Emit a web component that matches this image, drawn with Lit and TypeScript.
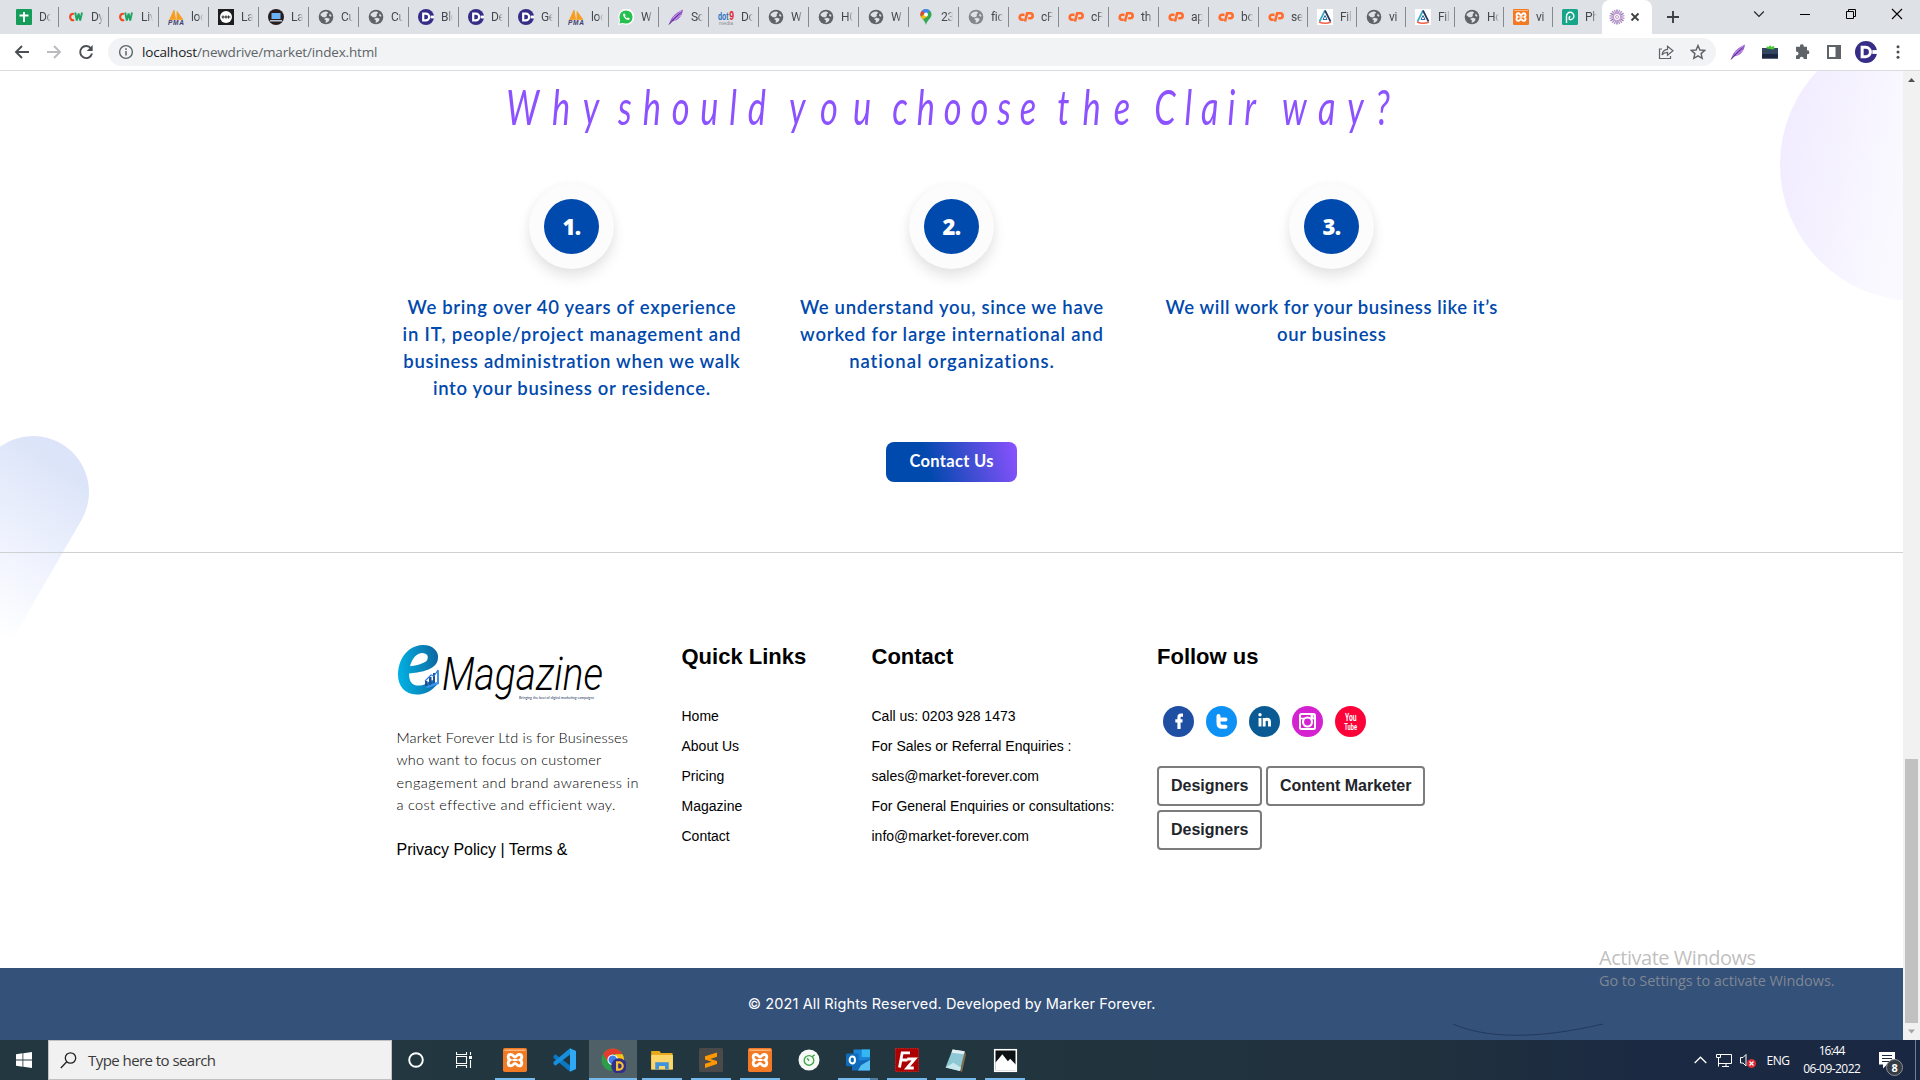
import { LitElement, html, css, svg } from "lit";
import { customElement } from "lit/decorators.js";

const fit = (text: string, w: number) => html`<span class="fit" data-w=${w}>${text}</span>`;

const TABS: [string, string][] = [
  ["sheets", "Do"], ["cw", "Dy"], ["cw", "Liv"], ["pma", "loc"], ["ink", "La"], ["laptop", "La"],
  ["globe", "Cu"], ["globe", "Cu"], ["dlogo", "Blo"], ["dlogo", "De"], ["dlogo", "Ge"], ["pma", "loc"],
  ["whatsapp", "W"], ["feather", "Sc"], ["dot9", "Do"], ["globe", "W"], ["globe", "HC"], ["globe", "W"],
  ["maps", "23"], ["globeg", "fic"], ["cp", "cP"], ["cp", "cP"], ["cp", "th"], ["cp", "ap"], ["cp", "bo"],
  ["cp", "se"], ["tri", "Fil"], ["globe", "vi"], ["tri", "Fil"], ["globe", "Ho"], ["xampp", "vi"], ["php", "Ph"],
];

const globe = (c: string) => svg`<circle cx="8" cy="8" r="7.3" fill=${c}/><path d="M2.300 6C3.500 3.700 5.800 2.400 8.600 2.600L10.200 3.600 8.600 5.600 8.900 7 7 8.400 4.500 8Z M8.500 8.800 11.500 9.600 11.200 11.800 9 13.600 7.400 13.800 8 11.500 6 10ZM11.800 4.600 13.700 7 12.400 7.800 11 6.600Z" fill="#dee1e6"/>`;
const dlogo = svg`<circle cx="8" cy="8" r="8" fill="#352d86"/><path d="M12.600 6.600H16v2.800h-3.400Z" fill="#fff"/><path d="M5.200 4.600h2.600a3.400 3.400 0 0 1 0 6.800H5.200Z" fill="none" stroke="#fff" stroke-width="2.200"/>`;
const feather = svg`<path d="M1 15.500C2 11 5 5 15 .5 14.500 7 10 12 4 12.500Z" fill="#9a5fd0"/><path d="M1 15.500 12 3.500" stroke="#542a86" stroke-width="1"/><path d="M5 9 13 2M6 11.500 13 6" stroke="#d9bcf5" stroke-width=".7"/>`;
const xampp = svg`<rect width="16" height="16" rx="1.200" fill="#f27a24"/><path d="M1 1.500h14" stroke="#fbb67c" stroke-width="1"/><path d="M5.300 4.300C3 4.300 3 7 4.600 8 3 9 3 11.900 5.300 11.900 6.800 11.900 7 10.200 8 10.200S9.200 11.900 10.700 11.900C13 11.900 13 9 11.400 8 13 7 13 4.300 10.700 4.300 9.200 4.300 9 6 8 6S6.800 4.300 5.300 4.300Z" fill="none" stroke="#fff" stroke-width="1.900"/><path d="M6.300 8h3.400" stroke="#fff" stroke-width="1.400"/>`;

const ICONS: Record<string, unknown> = {
  sheets: svg`<rect width="16" height="16" rx="1" fill="#159c58"/><path d="M8 3v10M3.500 6.500h9" stroke="#fff" stroke-width="1.900"/>`,
  cw: svg`<path d="M6 5.200A2.600 3.200 0 1 0 6 10.800" fill="none" stroke="#ee4b23" stroke-width="2.200"/><path d="M7.200 3.500l1.600 8L10.600 4.500l1.600 7L14 3.500" fill="none" stroke="#1fa463" stroke-width="1.900"/>`,
  pma: svg`<path d="M6 1 7.500 10H2ZM9 2.500 14.500 10H9ZM1 10.300h14" fill="#f89c1c" stroke="#f89c1c" stroke-width=".8"/><text x="0" y="16" font-size="6.500" font-weight="700" font-style="italic" textLength="16" fill="#3c3c6e">PMA</text>`,
  ink: svg`<rect width="16" height="16" fill="#1c1c1e"/><circle cx="8" cy="8" r="6" fill="#fff"/><path d="M3.500 8h9M5 6.500v3M8 6.500v3M10.500 6.500v3" stroke="#333" stroke-width="1.200"/>`,
  laptop: svg`<circle cx="8" cy="8" r="8" fill="#2a1c1c"/><rect x="3.500" y="4" width="9" height="6" fill="#6bb1f5"/><path d="M2 11.800h12" stroke="#c7d6e6" stroke-width="1.400"/>`,
  globe: globe("#5f6368"),
  globeg: globe("#84878a"),
  dlogo,
  whatsapp: svg`<path d="M0 16 1 11A8 8 0 1 1 5 15Z" fill="#fff"/><circle cx="8" cy="8" r="6.600" fill="#25c04d"/><path d="M1.400 14.600 2.500 10 6 13.800Z" fill="#25c04d"/><path d="M5.200 4.800C4.500 7.500 8 11.500 11 11l.8-1.700-1.800-.9-.9.8C8 8.600 7.200 7.800 6.900 7l.7-.8-.8-1.700Z" fill="#fff"/>`,
  feather,
  dot9: svg`<text x="0" y="10.500" font-size="11" font-weight="700" textLength="10.500" lengthAdjust="spacingAndGlyphs" fill="#1e6fbd">dot</text><text x="11.200" y="10.500" font-size="12" font-weight="700" textLength="4.800" lengthAdjust="spacingAndGlyphs" fill="#e22733">9</text><text x="1" y="16" font-size="5" textLength="14" fill="#8d8d8d">media</text>`,
  maps: svg`<path d="M8 0a5.600 5.600 0 0 0-5.600 5.600C2.400 9.500 7 11 8 16 9 11 13.600 9.500 13.600 5.600A5.600 5.600 0 0 0 8 0" fill="#34a853"/><path d="M8 0a5.600 5.600 0 0 0-4.300 2L8 5.600 11.800 1.500A5.600 5.600 0 0 0 8 0" fill="#4285f4"/><path d="M3.700 2a5.600 5.600 0 0 0-.8 5.800L7 3.500Z" fill="#ea4335"/><path d="M2.900 7.800 5 10.600 9.800 7 8 4Z" fill="#fbbc04"/><circle cx="8" cy="5.600" r="2" fill="#fff"/>`,
  cp: svg`<path d="M6.500 5.800H4.200a2.500 2.500 0 0 0 0 5h1.500M7 12.500 9.200 4.200h3a2.500 2.500 0 0 1 0 5h-2" fill="none" stroke="#ff6c2c" stroke-width="2.600"/>`,
  tri: svg`<rect width="16" height="16" fill="#fff"/><path d="M8 1.500 2.500 12.500" stroke="#3ca7c9" stroke-width="1.700"/><path d="M8 1.500 13.500 12.500" stroke="#27355c" stroke-width="1.700"/><path d="M2 13q6 2.500 12 0" stroke="#ef6044" stroke-width="1.700" fill="none"/><path d="M8 6.500 6 10.500h4Z" fill="none" stroke="#2a6fa8"/>`,
  xampp,
  php: svg`<rect width="16" height="16" rx="1.500" fill="#17a589"/><path d="M4.500 14V7a3.700 3.700 0 1 1 3.700 3.700C6.500 10.500 6.800 7.500 8.400 7.500" fill="none" stroke="#fff" stroke-width="1.400"/>`,
  swirl: svg`<g stroke-width="1.300">${Array.from({ length: 18 }, (_, i) => svg`<path d="M8 3.800V.4" stroke=${i % 3 ? "#b58fc6" : "#8276b8"} transform=${`rotate(${i * 20} 8 8)`}/>`)}</g><circle cx="8" cy="8" r="3.700" fill="none" stroke="#c39ac9" stroke-width="1.500"/><circle cx="8" cy="8" r="1.500" fill="none" stroke="#a98bc4" stroke-width=".8"/>`,
  tabx: svg`<path d="M4.500 4.500l7 7M11.500 4.500l-7 7" stroke="#3c4043" stroke-width="1.800"/>`,
  plus: svg`<path d="M8 2v12M2 8h12" stroke="#3c4043" stroke-width="1.900"/>`,
  chev: svg`<path d="M3.200 5.500 8 10.500l4.800-5" stroke="#222" stroke-width="1.100" fill="none"/>`,
  min: svg`<path d="M3 8.500h10" stroke="#000"/>`,
  restore: svg`<path d="M3.500 5.500h7v7h-7ZM5.500 5.500v-2h7v7h-2" stroke="#000" fill="none"/>`,
  close: svg`<path d="M3 3l10 10M13 3 3 13" stroke="#000" stroke-width="1.100"/>`,
  back: svg`<path d="M15 8H2.500M8 2 2 8l6 6" stroke="#4b4f54" stroke-width="1.900" fill="none"/>`,
  fwd: svg`<path d="M1 8h12.500M8 2l6 6-6 6" stroke="#b9bbbe" stroke-width="1.900" fill="none"/>`,
  reload: svg`<path d="M13 4.500A6 6 0 1 0 14 9.500" stroke="#4b4f54" stroke-width="1.900" fill="none"/><path d="M14.700 1v6h-6Z" fill="#4b4f54"/>`,
  info: svg`<circle cx="8" cy="8" r="6.400" stroke="#5f6368" stroke-width="1.400" fill="none"/><path d="M8 7v4.500M8 4.300v1.700" stroke="#5f6368" stroke-width="1.500"/>`,
  share: svg`<path d="M4 5H1.500v9.500h11V12" stroke="#5f6368" stroke-width="1.200" fill="none"/><path d="M4 11C4.500 7.500 6.500 5.600 9.500 5.400V2.200L15 6.800 9.500 11.300V8.300C7.300 8.300 5.500 9 4 11Z" stroke="#5f6368" stroke-width="1.200" fill="none"/>`,
  star: svg`<path d="M8 1.500 9.900 6l4.900.4-3.700 3.200 1.100 4.800L8 11.900l-4.200 2.500 1.100-4.800L1.200 6.400 6.100 6Z" stroke="#5f6368" stroke-width="1.400" fill="none"/>`,
  folder: svg`<path d="M0 4h16v10.500H0Z" fill="#33465f"/><path d="M0 10h16v4.500H0Z" fill="#1b2640"/><path d="M4.500 4.500V2.500l2 .5L8 1.200l1.500 1.600L12 2l.5 2.500-1.500 1Z" fill="#46c832"/>`,
  puzzle: svg`<path d="M6 1.500a1.900 1.900 0 0 1 3.600 1.300H13v3.600a1.900 1.900 0 1 1 0 3.700V15H9.500a1.900 1.900 0 1 0-3.700 0H2v-3.700a1.900 1.900 0 1 0 0-3.600V2.800h4Z" fill="#5f6368"/>`,
  side: svg`<path d="M2 2h12v12H2Z" stroke="#5f6368" stroke-width="2" fill="none"/><path d="M9.500 2H14v12H9.500Z" fill="#5f6368"/>`,
  kebab: svg`<g fill="#4b4f54"><circle cx="8" cy="2.800" r="1.500"/><circle cx="8" cy="8" r="1.500"/><circle cx="8" cy="13.200" r="1.500"/></g>`,
  vscode: svg`<path d="M1 5.300 2.300 4.200 12 11.700V15.800L1 6.600Z" fill="#0a78c2"/><path d="M1 10.700 2.300 11.800 12 4.300V.2L1 9.400Z" fill="#168fdc"/><path d="M12 .2 16 2v12l-4 1.800Z" fill="#2fa8f5"/>`,
  chrome: svg`<circle cx="7.500" cy="7.500" r="7.200" fill="#2c9e48"/><path d="M1.300 4A7.200 7.200 0 0 1 13.800 4H7.500L4.500 9Z" fill="#e33b2e"/><path d="M13.800 4A7.200 7.200 0 0 1 7.500 14.700L10.600 9 9 4Z" fill="#fbc116"/><circle cx="7.500" cy="7.500" r="3.400" fill="#fff"/><circle cx="7.500" cy="7.500" r="2.700" fill="#3f7fe8"/><circle cx="11.500" cy="11.500" r="5" fill="#352d86"/><path d="M10.300 9.200h1.300a2.300 2.300 0 0 1 0 4.600h-1.300Z" stroke="#f4c12f" stroke-width="1.400" fill="none"/>`,
  explorer: svg`<path d="M.8 2h5.500l1 1.400H15V14.300H.8Z" fill="#e5a81b"/><path d="M.8 4.600h14.500v9.700H.8Z" fill="#fcd669"/><path d="M3.500 9.500h9v4.800h-2.500v-2.300h-4v2.300H3.500Z" fill="#3f93dd"/>`,
  sublime: svg`<rect width="16" height="16" rx="1" fill="#4a4a4a"/><path d="M4 5.500 12 3v2.800L7.500 7.300 12 8.700v2L4 13.300v-2.800l4.500-1.400L4 7.700Z" fill="#ff9800"/>`,
  timer: svg`<circle cx="8" cy="8" r="7" fill="#f7f9f7"/><circle cx="8" cy="8.300" r="3.200" fill="none" stroke="#3fa648" stroke-width=".9"/><path d="M8 8.500 6.800 6.800M10 5.800 11.800 4.600" stroke="#3fa648" stroke-width=".9"/>`,
  outlook: svg`<path d="M5 1h11v10H5Z" fill="#1a84d8"/><path d="M10.500 1H16v5h-5.500Z" fill="#35b8f1"/><path d="M4 9l12-1.500V15H4Z" fill="#1269b5"/><path d="M10 11.500 16 8v7H8Z" fill="#55c1f3"/><rect y="3.700" width="8.500" height="8.500" rx=".8" fill="#0f6cbd"/><ellipse cx="4.200" cy="8" rx="1.800" ry="2.300" fill="none" stroke="#fff" stroke-width="1.300"/>`,
  fz: svg`<rect x=".3" y=".3" width="15.400" height="15.400" fill="#ad0000" stroke="#c72020" stroke-dasharray="1 .6" stroke-width=".7"/><path d="M3 13 4.800 3.200H10M4 8h4.300M8.200 7.300h5L8 13.300h4.500" stroke="#fff" stroke-width="1.900" fill="none"/>`,
  notepad: svg`<path d="M5.500 1 13.500 2.500 14 4.500 11.500 15.500 9.500 14Z" fill="#7f6a4c"/><path d="M5.500 1 13.200 2 10.200 14.700 1 12.500Z" fill="#8dc8d4"/><path d="M5.500 1 13.200 2 12.700 4 4.800 3Z" fill="#dfeff2"/><path d="M1 12.500 6 9.500 10.800 12.500 10.200 14.700Z" fill="#c9e8ed"/>`,
  photos: svg`<rect x="1.100" y="1.100" width="13.800" height="13.800" fill="#0c1114" stroke="#fff"/><path d="M1.500 14.600V9.500L6 4l3.500 4.500L11 6.800l3.800 4v3.800Z" fill="#fff"/>`,
};
const ic = (name: string, size = 16) => html`<svg class="ic" viewBox="0 0 16 16" width=${size} height=${size}>${ICONS[name]}</svg>`;

const TASKS: [string, number, string][] = [
  ["xampp", 24, "run"], ["vscode", 24, ""], ["chrome", 25, "on"], ["explorer", 24, "run"], ["sublime", 24, "run"],
  ["xampp", 24, "run"], ["timer", 24, ""], ["outlook", 24, "run multi"], ["fz", 24, "run"], ["notepad", 25, "run"], ["photos", 25, "run"],
];

const WORDS: [string, number, number][] = [
  ["Why", 93, 0], ["should", 148, 19], ["you", 82, 23], ["choose", 144, 21], ["the", 73, 21], ["Clair", 102, 24], ["way?", 108, 26],
];
const SQUEEZE = 0.7;

const STEPS: [string, [string, number][]][] = [
  ["1.", [["We bring over 40 years of experience", 328], ["in IT, people/project management and", 338], ["business administration when we walk", 337], ["into your business or residence.", 277]]],
  ["2.", [["We understand you, since we have", 303], ["worked for large international and", 303], ["national organizations.", 205]]],
  ["3.", [["We will work for your business like it’s", 332], ["our business", 109]]],
];

const SOCIAL = [
  svg`<circle cx="15.500" cy="15.500" r="15.500" fill="#1f4fa3"/><path d="M20 9.200h-2c-1.500 0-2 .7-2 2V23M12.300 14.800H19.500" stroke="#fff" stroke-width="3.200" fill="none"/>`,
  svg`<circle cx="15.500" cy="15.500" r="15.500" fill="#0d91f5"/><path d="M12.500 10V17c0 2.800 1.300 3.800 3.500 3.800H19.500M12.500 13.500h7" stroke="#fff" stroke-width="4" stroke-linecap="round" fill="none"/>`,
  svg`<circle cx="15.500" cy="15.500" r="15.500" fill="#0a5a93"/><path d="M11 12v8.500M15.200 20.500V12M15.200 15.500c0-2.800 5.300-3.200 5.300.5v4.500" stroke="#fff" stroke-width="2.900" fill="none"/><circle cx="11" cy="8.700" r="1.700" fill="#fff"/>`,
  svg`<circle cx="15.500" cy="15.500" r="15.500" fill="#d422d0"/><rect x="8" y="8" width="15" height="15" rx="1.500" stroke="#fff" stroke-width="2" fill="none"/><circle cx="15.500" cy="16" r="4.500" stroke="#fff" stroke-width="2.200" fill="none"/><path d="M8 12.500h4M19 12.500h4" stroke="#fff" stroke-width="1.500"/><rect x="18.500" y="9" width="3" height="3" fill="#fff"/>`,
  svg`<circle cx="15.500" cy="15.500" r="15.500" fill="#fb0338"/><g fill="#fff" font-family="Roboto,sans-serif" font-weight="700" font-size="10"><text x="10" y="15.300" textLength="11.500" lengthAdjust="spacingAndGlyphs">You</text><text x="9.300" y="23.500" textLength="12.800" lengthAdjust="spacingAndGlyphs" font-size="9.500">Tube</text></g>`,
];

@customElement("app-root")
export class AppRoot extends LitElement {
  static styles = css`
    :host { display: flex; flex-direction: column; width: 1920px; height: 1080px; overflow: hidden; background: #fff; font-family: "Open Sans", "Noto Sans", sans-serif; color: #000; }
    * { box-sizing: border-box; }
    p, h2, h3, ul { margin: 0; padding: 0; font-weight: inherit; }
    ul { list-style: none; }
    svg { display: block; flex: none; }
    .fit { display: inline-block; white-space: nowrap; }

    .tabs { display: flex; height: 34px; background: #dee1e6; padding-left: 8px; flex: none; }
    .tab { display: flex; align-items: center; width: 50px; height: 34px; padding-left: 9px; position: relative; flex: none; }
    .tab.first { width: 51px; padding-left: 8px; }
    .tab.slim { width: 49px; }
    .tab::after { content: ""; position: absolute; right: 0; top: 7px; width: 1px; height: 20px; background: #86898d; }
    .tab.last::after { display: none; }
    .tab .label { margin-left: 7px; width: 12px; overflow: hidden; white-space: nowrap; font: 12px/16px Roboto, sans-serif; letter-spacing: -0.3px; color: #45484c; -webkit-mask-image: linear-gradient(90deg, #000 55%, transparent); mask-image: linear-gradient(90deg, #000 55%, transparent); }
    .tab .ic { font-family: "Liberation Sans", sans-serif; }
    .active { display: flex; align-items: center; width: 50px; background: #fff; border-radius: 8px 8px 0 0; padding-left: 7px; gap: 2px; }
    .newtab { display: flex; align-items: center; width: 90px; padding-left: 13px; }
    .winbtns { display: flex; align-items: center; height: 28px; margin-left: auto; gap: 30px; padding-right: 15px; }

    .toolbar { display: flex; align-items: center; height: 37px; border-bottom: 1px solid #dadce0; flex: none; padding: 0 14px; }
    .nav { display: flex; gap: 16px; }
    .omni { display: flex; align-items: center; width: 1608px; height: 28px; border-radius: 14px; background: #f1f3f4; margin-left: 14px; padding: 0 10px; }
    .url { margin-left: 8px; font-size: 13.500px; color: #5f6368; }
    .url b { font-weight: 400; color: #202124; }
    .omni .right { margin-left: auto; display: flex; gap: 16px; }
    .ext { display: flex; align-items: center; margin-left: 14px; gap: 16px; }
    .ext .avatar { margin: 0 -3px; }

    .view { display: flex; height: 969px; flex: none; position: relative; }
    .page { position: relative; width: 1903px; height: 969px; overflow: hidden; display: flex; flex-direction: column; }
    .decor { position: absolute; left: 0; top: 0; }
    .why { position: relative; height: 482px; border-bottom: 1px solid #cfd0d2; display: flex; flex-direction: column; align-items: center; flex: none; }
    .title { display: flex; justify-content: center; height: 64px; margin-top: 2px; font: italic 400 49px/66px Lato, sans-serif; color: #8c52ff; transform: scaleX(0.7); margin-left: -6px; }
    .steps { display: flex; width: 1140px; margin-top: 47px; height: 211px; }
    .step { width: 380px; display: flex; flex-direction: column; align-items: center; }
    .ring { width: 85px; height: 85px; border-radius: 50%; background: #fcfcfc; padding: 15px; box-shadow: 0 8px 14px rgba(0, 0, 0, 0.1), 0 0 10px rgba(0, 0, 0, 0.03); }
    .num { width: 55px; height: 55px; border-radius: 50%; background: #0049ad; color: #fff; display: flex; align-items: center; justify-content: center; font: 800 22px/55px "Open Sans", sans-serif; letter-spacing: -0.5px; }
    .copy { margin-top: 25px; text-align: center; font: 600 18.500px/27px Lato, sans-serif; color: #0049ad; }
    .copy p { height: 27px; }
    .cta { margin-top: 47px; width: 131px; height: 40px; border-radius: 8px; background: linear-gradient(75deg, #0049ad 32%, #8c52ff); color: #fff; font: 700 16.500px/39px Lato, sans-serif; text-align: center; }

    .foot { position: relative; display: flex; width: 1140px; height: 415px; margin: 0 auto; padding: 0 15px; font: 14px/30px "Liberation Sans", Arial, sans-serif; flex: none; }
    .foot h3 { font-size: 22px; line-height: 26px; font-weight: 700; padding-top: 91px; height: 148px; }
    .brand { width: 285px; padding-top: 92px; }
    .about { font: 300 14.500px/22.400px Lato, sans-serif; color: #000; margin-top: 26px; }
    .about p { height: 22.400px; }
    .legal { font-size: 16px; line-height: 24px; margin-top: 21px; }
    .links { width: 190px; }
    .contact { width: 285.500px; }
    .follow { width: 300px; }
    .social { display: flex; gap: 12px; padding-left: 6px; margin-top: 5px; }
    .tags { display: flex; flex-wrap: wrap; gap: 4px; margin-top: 29px; font: 700 16px/36px "Liberation Sans", Arial, sans-serif; color: #212529; }
    .tags span { height: 40px; border: 2px solid #7c7c7c; border-radius: 4px; padding: 0 12px; }
    .tags .wide { padding: 0 11.500px; }

    .copyright { height: 72px; background: #345179; color: #fff; text-align: center; font: 400 14.500px/71px Inter, sans-serif; position: relative; flex: none; }
    .scroll { width: 17px; background: #f1f1f1; display: flex; flex-direction: column; align-items: center; }
    .thumb { width: 13px; height: 264px; background: #c1c1c1; margin-top: 671px; }
    .watermark { position: absolute; left: 1599px; top: 873px; white-space: nowrap; color: rgba(150, 150, 150, 0.62); }
    .watermark .big { font-size: 20px; line-height: 28px; }
    .watermark .small { font-size: 14.500px; line-height: 18px; color: rgba(160, 160, 160, 0.7); }

    .task { display: flex; height: 40px; background: linear-gradient(90deg, #22373f 0%, #22363f 50%, #20303d 75%, #1b2a42 85%, #1a2742 100%); color: #fff; align-items: center; flex: none; }
    .start { width: 48px; padding-left: 16px; }
    .search { width: 344px; height: 40px; border: 1px solid #bfc1c2; background: #f1f1f1; display: flex; align-items: center; padding-left: 11px; gap: 11px; color: #3a3a3a; font-size: 15px; }
    .cell { width: 48px; height: 40px; display: flex; align-items: center; justify-content: center; position: relative; margin-right: 1px; }
    .cell.tight { margin-right: 0; }
    .cell.spacer { width: 3px; }
    .cell.on { background: #4f6067; }
    .cell.run::after, .cell.on::after { content: ""; position: absolute; left: 4px; right: 4px; bottom: 0; height: 2px; background: #76b9ed; }
    .cell.on::after { left: 0; right: 0; }
    .cell.multi::after { background: linear-gradient(90deg, #76b9ed 79%, #4f7da3 79%); }
    .tray { margin-left: auto; display: flex; align-items: center; height: 40px; font-size: 12px; }
    .clock { display: flex; flex-direction: column; align-items: center; line-height: 18px; width: 60px; margin-left: 12px; }
    .lang { margin-left: 10px; }
  `;

  firstUpdated() {
    // Tracks each run of text so that it spans its intended width.
    this.renderRoot.querySelectorAll<HTMLElement>(".fit").forEach((el) => {
      const n = (el.textContent || "").length;
      const gap = (Number(el.dataset.w) - el.offsetWidth) / Math.max(1, n - 1);
      el.style.letterSpacing = `${gap}px`;
      el.style.marginRight = `${-gap}px`;
    });
  }

  render() {
    return html`
      <div class="tabs">
        ${TABS.map(([i, t], n) => html`<div class="tab ${n === 0 ? "first" : ""} ${n > 24 ? "slim" : ""} ${n === 31 ? "last" : ""}">${ic(i)}<span class="label">${t}</span></div>`)}
        <div class="active">${ic("swirl")}${ic("tabx")}</div>
        <div class="newtab">${ic("plus")}</div>
        <div class="winbtns">${["chev", "min", "restore", "close"].map((i) => ic(i))}</div>
      </div>
      <div class="toolbar">
        <div class="nav">${ic("back")}${ic("fwd")}${ic("reload")}</div>
        <div class="omni">${ic("info")}
          <span class="url"><span class="fit" data-w="235"><b>localhost</b>/newdrive/market/index.html</span></span>
          <span class="right">${ic("share")}${ic("star")}</span>
        </div>
        <div class="ext">${ic("feather")}${ic("folder")}${ic("puzzle")}${ic("side")}<span class="avatar">${ic("dlogo", 22)}</span>${ic("kebab")}</div>
      </div>
      <div class="view">
        <div class="page">
          <svg class="decor" width="1903" height="969" viewBox="0 71 1903 969">
            <defs>
              <linearGradient id="pill" gradientUnits="userSpaceOnUse" x1="85" y1="480" x2="-15" y2="625"><stop offset="0" stop-color="#dbe4f8"/><stop offset=".55" stop-color="#f0f3fe"/><stop offset="1" stop-color="#fff"/></linearGradient>
              <linearGradient id="disc" gradientUnits="userSpaceOnUse" x1="1780" y1="150" x2="1903" y2="170"><stop offset="0" stop-color="#f1ecff"/><stop offset="1" stop-color="#faf9ff"/></linearGradient>
            </defs>
            <path d="M-15.500 464A56 56 0 1 1 81.500 520L11 642H-80V521Z" fill="url(#pill)"/>
            <circle cx="1916.300" cy="164.600" r="136.300" fill="url(#disc)"/>
          </svg>
          <section class="why">
            <h2 class="title">${WORDS.map(([w, width, gap]) => html`<span style="margin-left:${gap / SQUEEZE}px">${fit(w, width / SQUEEZE)}</span>`)}</h2>
            <div class="steps">
              ${STEPS.map(([n, lines]) => html`<div class="step">
                <div class="ring"><div class="num">${n}</div></div>
                <div class="copy">${lines.map(([t, w]) => html`<p>${fit(t, w)}</p>`)}</div>
              </div>`)}
            </div>
            <div class="cta">${fit("Contact Us", 84)}</div>
          </section>
          <footer class="foot">
            <div class="brand">
              <svg width="212" height="56" viewBox="396 644 212 56">
                <defs><linearGradient id="mark" x1="0" y1=".6" x2="1" y2=".3"><stop offset="0" stop-color="#00b4e6"/><stop offset=".6" stop-color="#0a82b8"/><stop offset="1" stop-color="#0a5a98"/></linearGradient></defs>
                <text x="395" y="693" font-family="Lato" font-weight="700" font-style="italic" font-size="93" textLength="45" lengthAdjust="spacingAndGlyphs" fill="url(#mark)">e</text>
                <path d="M424 680h2.500v5H424ZM428 676h2.500v8H428ZM432 672h2v10h-2Z" fill="#1f4f94"/><path d="M424 686 436 681V670l2-1v14l-11 4Z" fill="#3c92ee"/><path d="M424 680 430 674l3 1 4-6" stroke="#2d7fe0" stroke-width="1.200" fill="none"/>
                <text x="441" y="688.500" font-family="Roboto" font-weight="300" font-style="italic" font-size="46" textLength="161" lengthAdjust="spacingAndGlyphs">Magazine</text>
                <text x="518" y="697.500" font-family="Lato" font-size="4" textLength="75" lengthAdjust="spacingAndGlyphs" fill="#22335e">Bringing the best of digital marketing campaigns</text>
              </svg>
              <div class="about">
                <p>${fit("Market Forever Ltd is for Businesses", 232)}</p>
                <p>${fit("who want to focus on customer", 205)}</p>
                <p>${fit("engagement and brand awareness in", 242)}</p>
                <p>${fit("a cost effective and efficient way.", 218)}</p>
              </div>
              <div class="legal">${fit("Privacy Policy | Terms &", 171)}</div>
            </div>
            <div class="links"><h3>Quick Links</h3>
              <ul>${["Home", "About Us", "Pricing", "Magazine", "Contact"].map((t) => html`<li>${t}</li>`)}</ul>
            </div>
            <div class="contact"><h3>Contact</h3>
              <ul>${["Call us: 0203 928 1473", "For Sales or Referral Enquiries :", "sales@market-forever.com", "For General Enquiries or consultations:", "info@market-forever.com"].map((t) => html`<li>${t}</li>`)}</ul>
            </div>
            <div class="follow"><h3>Follow us</h3>
              <div class="social">${SOCIAL.map((s) => html`<svg width="31" height="31" viewBox="0 0 31 31">${s}</svg>`)}</div>
              <div class="tags"><span>Designers</span><span class="wide">Content Marketer</span><span>Designers</span></div>
            </div>
          </footer>
          <div class="copyright">${fit("© 2021 All Rights Reserved. Developed by Marker Forever.", 408)}</div>
          <svg class="decor" width="1903" height="969" viewBox="0 71 1903 969"><path d="M1453 1024C1485 1038 1535 1040 1603 1024" stroke="#22395c" fill="none"/></svg>
        </div>
        <div class="scroll">
          <svg width="17" height="17" viewBox="0 0 17 17"><path d="M5 11l3.500-4 3.500 4Z" fill="#505050"/></svg>
          <div class="thumb"></div>
          <svg width="17" height="17" viewBox="0 0 17 17"><path d="M5 6.500l3.500 4 3.500-4Z" fill="#a3a3a3"/></svg>
        </div>
        <div class="watermark"><div class="big">${fit("Activate Windows", 157)}</div><div class="small">${fit("Go to Settings to activate Windows.", 236)}</div></div>
      </div>
      <div class="task">
        <div class="start"><svg width="16" height="16" viewBox="0 0 16 16"><path d="M0 2.200 6.500 1.300V7.600H0ZM7.300 1.200 16 0V7.600H7.300ZM0 8.400H6.500V14.700L0 13.800ZM7.300 8.400H16V16L7.300 14.800Z" fill="#fff"/></svg></div>
        <div class="search"><svg width="17" height="17" viewBox="0 0 17 17"><circle cx="10.500" cy="6" r="5.200" stroke="#222" stroke-width="1.300" fill="none"/><path d="M6.800 9.800.8 16" stroke="#222" stroke-width="1.300"/></svg>${fit("Type here to search", 128)}</div>
        <div class="cell tight"><svg width="16" height="16" viewBox="0 0 16 16"><circle cx="8" cy="8" r="6.800" stroke="#fff" stroke-width="1.900" fill="none"/></svg></div>
        <div class="cell tight"><svg width="16" height="16" viewBox="0 0 16 16"><path d="M.5 0v2.500h10V0M.5 16v-2.500h10V16M.5 4.500h10v7H.5ZM14.500 0v3M14.500 8v8" stroke="#fff" stroke-width="1.100" fill="none"/><rect x="13" y="4" width="3" height="3" fill="#fff"/></svg></div>
        <div class="cell tight spacer"></div>
        ${TASKS.map(([i, s, c]) => html`<div class="cell ${c}">${ic(i, s)}</div>`)}
        <div class="tray">
          <svg width="13" height="8" viewBox="0 0 13 8"><path d="M.7 7 6.500 1.200 12.300 7" stroke="#fff" stroke-width="1.300" fill="none"/></svg>
          <svg width="50" height="18" viewBox="1708 1051 50 18"><path d="M1721 1054.500h11.500v9H1719.500V1058M1727 1063.500v3M1723 1066.500h7M1717.500 1054.500h4v3h-4ZM1719.500 1058v8.500" stroke="#fff" fill="none"/><path d="M1741.500 1057.500h2.500l3-3v11.500l-3-3h-2.500Z" stroke="#fff" fill="none"/><circle cx="1752.500" cy="1063.500" r="4.600" fill="#dc2b35"/><path d="M1750.500 1061.500l4 4M1754.500 1061.500l-4 4" stroke="#fff" stroke-width="1.200"/></svg>
          <span class="lang">${fit("ENG", 23)}</span>
          <div class="clock"><span>${fit("16:44", 27)}</span><span>${fit("06-09-2022", 58)}</span></div>
          <svg width="58" height="40" viewBox="1862 1040 58 40"><path d="M1879 1052h16v12.500h-8l-4 4v-4h-4Z" fill="#fff"/><path d="M1882 1055.500h10M1882 1058.500h10M1882 1061.500h7" stroke="#1b2a42"/><circle cx="1894.500" cy="1067.500" r="8" fill="#363c44" stroke="#8b9198"/><text x="1891.400" y="1071.700" font-size="11" font-weight="700" fill="#fff">8</text><path d="M1915.500 1040v40" stroke="#76808d"/></svg>
        </div>
      </div>
    `;
  }
}
